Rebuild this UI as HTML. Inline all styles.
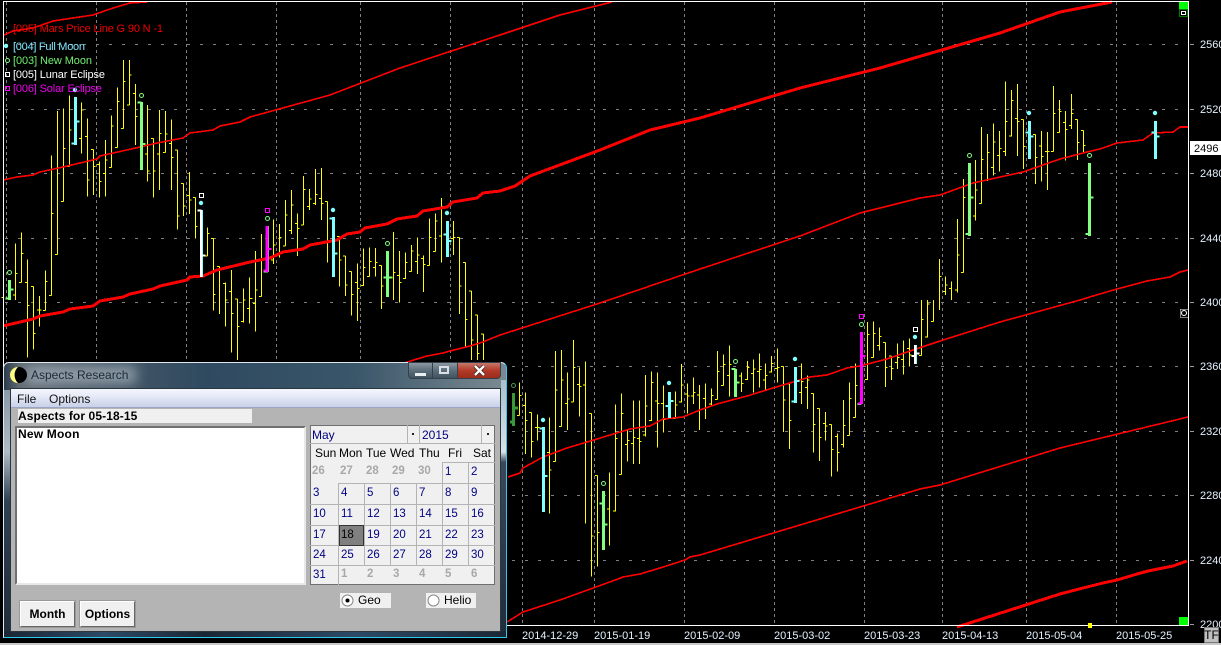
<!DOCTYPE html>
<html><head><meta charset="utf-8"><style>
html,body{margin:0;padding:0;background:#000;width:1221px;height:645px;overflow:hidden}
body{position:relative;font-family:"Liberation Sans",sans-serif}
svg.c{position:absolute;left:0;top:0}
svg text{font-family:"Liberation Sans",sans-serif;font-size:11px}
.a{position:absolute}
.t{position:absolute;white-space:nowrap;line-height:14px;font-size:12px}
.d{color:#000080;font-size:11.5px}
.g{color:#a8a8a8;font-size:11.5px;font-weight:bold}
.w{color:#000;font-size:12px}
.b{position:absolute;background:#f0f0f0;border:1px solid;border-color:#fff #666 #666 #fff;box-shadow:0 0 0 1px #999;box-sizing:border-box;text-align:center;font-weight:bold;font-size:12px;line-height:24px;color:#000}
</style></head><body>
<svg class="c" width="1221" height="645" viewBox="0 0 1221 645">
<rect width="1221" height="645" fill="#000"/>
<rect y="643" width="1221" height="2" fill="#c8c8c8"/>
<g stroke="#808080" fill="none" stroke-width="1" stroke-dasharray="3 10" shape-rendering="crispEdges">
<path d="M5 44.500H1188M5 109.500H1188M5 173.500H1188M5 238.500H1188M5 302.500H1188M5 366.500H1188M5 431.500H1188M5 495.500H1188M5 560.500H1188"/>
</g>
<g stroke="#808080" fill="none" stroke-width="1" stroke-dasharray="3 3" shape-rendering="crispEdges">
<path d="M6.500 2V625M96.500 2V625M186.500 2V625M276.500 2V625M360.500 2V625M450.500 2V625M522.500 2V625M594.500 2V625M684.500 2V625M774.500 2V625M864.500 2V625M942.500 2V625M1026.500 2V625M1116.500 2V625"/>
</g>
<g stroke="#ffff00" fill="none" stroke-width="3" shape-rendering="crispEdges">
<path transform="translate(0,60) scale(.33333)" d="M4 712h7M46 550V720M39 705h7M46 640h7M64 517V668M57 668h7M64 580h7M82 598V893M75 668h7M82 737h7M100 680V868M93 680h7M100 820h7M118 708V800M111 750h7M118 750h7M136 632V752M129 752h7M136 664h7M154 286V706M147 706h7M154 460h7M172 153V584M165 584h7M190 145V425M183 425h7M190 265h7M208 106V320M201 320h7M208 210h7M244 128V280M237 235h7M244 150h7M262 175V410M255 230h7M262 360h7M280 268V405M273 268h7M280 320h7M298 305V413M291 313h7M298 365h7M316 240V410M309 340h7M316 300h7M334 166V322M327 322h7M334 198h7M352 82V262M345 262h7M352 125h7M370 0V205M363 205h7M370 65h7M388 0V135M381 135h7M388 45h7M406 72V255M399 100h7M406 170h7M442 135V365M435 282h7M442 333h7M460 235V413M453 235h7M460 333h7M478 150V390M471 282h7M478 220h7M496 153V278M489 278h7M496 222h7M514 178V390M507 250h7M514 292h7M532 270V508M525 270h7M532 468h7M550 370V468M543 370h7M550 438h7M568 336V462M561 406h7M568 420h7M586 412V535M579 412h7M586 500h7M622 502V588M615 588h7M622 520h7M640 535V752M633 535h7M640 704h7M658 620V762M651 620h7M658 630h7M676 668V800M669 670h7M676 720h7M694 630V878M687 695h7M694 760h7M712 717V900M705 717h7M712 800h7M730 685V787M723 785h7M730 720h7M748 652V790M741 745h7"/>
<path transform="translate(250,160) scale(.33333)" d="M0 415h7M16 273V515M9 430h7M16 390h7M34 222V410M27 410h7M34 300h7M70 178V312M63 300h7M70 255h7M88 192V292M81 280h7M88 232h7M106 120V258M99 258h7M106 165h7M124 90V222M117 212h7M124 135h7M142 160V288M135 190h7M142 205h7M160 48V195M153 195h7M160 88h7M178 87V150M171 140h7M178 117h7M196 27V135M189 130h7M196 103h7M214 24V180M207 115h7M214 130h7M232 125V307M225 125h7M232 248h7M268 230V380M261 230h7M268 300h7M286 288V408M279 288h7M286 375h7M304 334V467M297 334h7M304 403h7M322 310V483M315 367h7M322 385h7M340 265V378M333 376h7M340 322h7M358 262V350M351 350h7M358 305h7M376 264V350M369 322h7M376 307h7M394 316V447M387 316h7M394 378h7M430 216V420M430 338h7M448 273V428M441 347h7M448 367h7M466 278V357M459 355h7M466 307h7M484 255V335M477 335h7M484 273h7M502 232V342M495 305h7M502 285h7M520 286V396M513 295h7M520 313h7M538 175V317M531 317h7M538 232h7M556 160V275M549 275h7M556 183h7M574 114V308M567 228h7M574 140h7M610 183V285M603 235h7M610 232h7M628 232V462M621 232h7M628 378h7M646 307V560M639 307h7M646 478h7M664 393V600M657 393h7M664 540h7M682 465V600M675 465h7M682 580h7M700 522V600M693 522h7"/>
<path transform="translate(500,340) scale(.33333)" d="M58 127V226M51 226h7M58 167h7M76 157V342M69 197h7M76 242h7M94 217V352M87 217h7M94 305h7M112 223V302M105 262h7M112 262h7M148 232V520M141 337h7M148 390h7M166 33V364M159 364h7M166 150h7M184 30V260M177 260h7M184 120h7M202 97V270M195 190h7M202 177h7M220 0V186M213 186h7M220 82h7M238 82V230M231 133h7M238 140h7M256 64V550M249 135h7M256 304h7M274 220V710M267 220h7M274 588h7M292 406V680M285 406h7M292 577h7M328 397V617M321 507h7M346 193V515M339 513h7M346 295h7M364 160V403M357 403h7M364 220h7M382 268V365M375 313h7M382 302h7M400 181V372M393 310h7M400 292h7M418 181V372M411 295h7M418 305h7M436 105V290M429 285h7M436 198h7M454 94V243M447 241h7M454 127h7M472 97V323M465 183h7M472 190h7M490 136V278M483 190h7M490 238h7M526 155V235M519 235h7M526 195h7M544 72V188M537 186h7M544 135h7M562 130V220M555 162h7M562 168h7M580 112V192M573 168h7M580 157h7M598 135V270M591 165h7"/>
<path transform="translate(700,300) scale(.33333)" d="M16 250V357M9 295h7M16 322h7M34 265V318M27 312h7M34 287h7M52 153V298M45 298h7M52 214h7M70 163V257M63 257h7M70 193h7M88 136V290M81 226h7M88 193h7M124 217V276M117 228h7M124 250h7M142 183V240M135 238h7M142 203h7M160 178V278M153 220h7M160 207h7M178 160V262M171 214h7M178 208h7M196 190V270M189 240h7M196 226h7M214 168V218M207 216h7M214 190h7M232 145V248M225 205h7M232 203h7M250 200V396M243 200h7M250 300h7M268 252V447M261 252h7M268 361h7M304 190V312M297 277h7M304 245h7M322 226V327M315 262h7M322 240h7M340 280V458M333 280h7M340 373h7M358 325V483M351 325h7M358 412h7M376 336V422M369 370h7M376 378h7M394 373V530M387 373h7M394 448h7M412 400V515M405 410h7M412 457h7M430 300V442M423 433h7M430 376h7M448 247V406M441 406h7M448 295h7M466 190V352M459 352h7M466 257h7M502 66V240M495 238h7M502 103h7M520 64V173M513 172h7M520 100h7M538 82V152M531 136h7M538 110h7M556 127V261M549 127h7M556 202h7M574 168V240M567 168h7M574 205h7M592 130V207M585 187h7M592 172h7M610 122V224M603 178h7M610 157h7M628 115V200M621 145h7M628 165h7M664 0V166M657 166h7M664 58h7M682 0V113M675 111h7M682 12h7M700 0V65M693 65h7"/>
<path transform="translate(920,70) scale(.33333)" d="M58 567V720M58 620h7M76 620V675M69 665h7M76 645h7M94 635V690M87 655h7M112 447V668M105 660h7M112 555h7M130 327V607M123 607h7M130 382h7M166 270V452M159 438h7M166 360h7M184 171V400M177 400h7M184 268h7M202 192V333M195 330h7M202 247h7M220 160V317M213 292h7M220 216h7M238 183V305M231 256h7M238 235h7M256 34V258M249 244h7M256 154h7M274 60V200M267 198h7M274 91h7M292 42V258M285 145h7M292 154h7M310 148V297M303 148h7M310 230h7M346 193V342M339 193h7M346 262h7M364 183V335M357 228h7M364 259h7M382 186V360M375 244h7M382 244h7M400 48V245M393 244h7M400 130h7M418 90V188M411 187h7M418 124h7M436 123V272M429 157h7M436 178h7M454 72V177M447 167h7M454 130h7M472 148V270M465 148h7M472 217h7M490 181V250M483 181h7M490 226h7"/>
</g>
<g fill="none" stroke="#ff0000" shape-rendering="crispEdges">
<polyline stroke-width="3" points="3,326 33,319 40,316 63,312 70,309 93,306 100,301 123,297 130,294 153,289 160,286 187,280 190,277 203,276 217,270 250,262 270,258 283,252 303,249 310,245 337,240 347,234 360,232 365,228 387,224 397,219 417,216 423,211 447,207 453,202 477,198 483,193 500,191 515,186 530,176 600,150 650,130 700,118 800,88 880,68 1000,33 1060,12 1112,2"/>
<polyline stroke-width="1.600" points="3,180 17,177 33,175 40,172 63,167 97,159 100,156 140,147 157,143 183,138 190,133 213,130 220,126 240,122 250,117 330,95 400,68 500,35 560,15 612,2"/>
<polyline stroke-width="1.600" points="4,35 13,31 33,28 53,21 93,15 113,8 130,3 147,2"/>
<polyline stroke-width="1.600" points="395,366 417,359 427,356 443,353 450,351 470,346 483,342 500,335 600,303 700,269 800,236 860,213 920,198 940,195 973,183 1023,172 1060,159 1087,152 1100,149 1117,143 1143,140 1153,133 1173,132 1180,127 1188,127"/>
<polyline stroke-width="1.600" points="508,477 520,473 523,468 543,457 567,448 597,439 630,429 650,426 663,419 683,417 700,410 717,404 747,396 773,388 810,377 827,375 847,368 860,366 887,359 913,350 940,341 1000,322 1080,300 1093,296 1117,289 1147,281 1170,277 1180,272 1188,270"/>
<polyline stroke-width="1.600" points="507,622 523,612 560,600 618,579 623,577 640,574 660,568 685,560 690,557 700,555 800,525 920,489 940,485 1060,448 1188,417"/>
<polyline stroke-width="3" points="957,627 1060,594 1083,588 1103,583 1117,580 1137,574 1148,571 1173,566 1187,561"/>
</g>
<g shape-rendering="crispEdges">
<path fill="none" stroke="#80ffff" stroke-width="3" d="M75.500 97V145M201.500 210V277M333.500 217V277M447.500 221V257M543.500 427V512M669.500 392V418M795.500 367V403M915.500 345V364M1029.500 121V159M1155.500 121V159"/>
<g stroke="#80ffff" stroke-width="6" fill="none"><path transform="translate(0,60) scale(.33333)" d="M215 250h11M226 184h12"/><path transform="translate(250,160) scale(.33333)" d="M238 175h12M250 280h12M580 223h12M592 243h13"/><path transform="translate(500,340) scale(.33333)" d="M118 265h12M130 408h13M496 198h12M508 183h13"/><path transform="translate(700,300) scale(.33333)" d="M274 305h12M286 243h13"/><path transform="translate(920,70) scale(.33333)" d="M316 187h12M328 199h13M694 187h12M706 199h13"/></g>
<path fill="none" stroke="#80ff80" stroke-width="3" d="M9.500 280V300M141.500 102V170M387.500 251V297M603.500 491V550M735.500 369V397M969.500 163V236M1089.500 163V236"/>
<g stroke="#80ff80" stroke-width="6" fill="none"><path transform="translate(0,60) scale(.33333)" d="M17 715h11M28 688h12M413 127h11M424 252h12"/><path transform="translate(250,160) scale(.33333)" d="M400 352h28M41 335h13"/><path transform="translate(500,340) scale(.33333)" d="M298 490h12M310 553h13"/><path transform="translate(700,300) scale(.33333)" d="M94 207h12M106 247h13M472 312h12"/><path transform="translate(920,70) scale(.33333)" d="M136 492h12M148 382h13M496 492h12M508 382h13"/></g>
<path d="M268.500 226V272" stroke="#80ff80" stroke-width="1" fill="none"/>
<path d="M513.500 393V426M510 422h4M514 408h4" stroke="#3a9a3a" stroke-width="3" fill="none"/>
<path d="M267 226V272M861.500 332V404" stroke="#ff00ff" stroke-width="3" fill="none"/>
<g stroke="#ff00ff" stroke-width="6" fill="none"><path transform="translate(250,160) scale(.33333)" d="M51 267h13M40 332h11"/><path transform="translate(700,300) scale(.33333)" d="M484 168h13M474 310h10"/></g>
<rect x="200" y="210" width="2" height="67" fill="#fff"/>
<rect x="914" y="345" width="2" height="19" fill="#fff"/>
<g stroke="#fff" stroke-width="6" fill="none"><path transform="translate(0,60) scale(.33333)" d="M592 452h12M604 586h13"/><path transform="translate(700,300) scale(.33333)" d="M634 168h12M646 160h13"/></g>
</g>
<g fill="#80ffff"><circle cx="75" cy="90" r="2.200"/><circle cx="201" cy="203" r="2.200"/><circle cx="333" cy="210" r="2.200"/><circle cx="447" cy="213" r="2.200"/><circle cx="543" cy="420" r="2.200"/><circle cx="669" cy="383" r="2.200"/><circle cx="795" cy="359" r="2.200"/><circle cx="915" cy="337" r="2.200"/><circle cx="1029" cy="113" r="2.200"/><circle cx="1155" cy="113" r="2.200"/><circle cx="6" cy="46" r="2.200"/></g>
<g fill="none" stroke="#80ff80" stroke-width="1"><circle cx="9.500" cy="272.500" r="2"/><circle cx="141.500" cy="95.500" r="2"/><circle cx="267.500" cy="218.500" r="2"/><circle cx="387.500" cy="243.500" r="2"/><circle cx="513.500" cy="385.500" opacity=".6" r="2"/><circle cx="603.500" cy="483.500" r="2"/><circle cx="735.500" cy="361.500" r="2"/><circle cx="861.500" cy="324.500" r="2"/><circle cx="969.500" cy="155.500" r="2"/><circle cx="1089.500" cy="155.500" r="2"/><circle cx="7.500" cy="60.500" r="2"/></g>
<g fill="none" stroke="#fff" shape-rendering="crispEdges"><rect x="199.500" y="193.500" width="4" height="4"/><rect x="913.500" y="327.500" width="4" height="4"/><rect x="5.500" y="72.500" width="4" height="4"/></g>
<g fill="none" stroke="#ff00ff" shape-rendering="crispEdges"><rect x="265.500" y="208.500" width="4" height="4"/><rect x="859.500" y="314.500" width="4" height="4"/><rect x="5.500" y="86.500" width="4" height="4"/></g>
<path d="M3.500 1V625.500M3.500 1.500H1188.500V625.500H3" fill="none" stroke="#fff" stroke-width="1" shape-rendering="crispEdges"/>
<g stroke="#999" shape-rendering="crispEdges"><path d="M1190 44.500h4M1190 109.500h4M1190 173.500h4M1190 238.500h4M1190 302.500h4M1190 366.500h4M1190 431.500h4M1190 495.500h4M1190 560.500h4M1190 624.500h4"/></g>
<g fill="#e4f2ff">
<text x="1200" y="48">2560</text><text x="1200" y="113">2520</text><text x="1200" y="177">2480</text><text x="1200" y="242">2440</text><text x="1200" y="306">2400</text><text x="1200" y="370">2360</text><text x="1200" y="435">2320</text><text x="1200" y="499">2280</text><text x="1200" y="564">2240</text><text x="1200" y="628">2200</text>
<text x="522" y="639">2014-12-29</text><text x="594" y="639">2015-01-19</text><text x="684" y="639">2015-02-09</text><text x="774" y="639">2015-03-02</text><text x="864" y="639">2015-03-23</text><text x="942" y="639">2015-04-13</text><text x="1026" y="639">2015-05-04</text><text x="1116" y="639">2015-05-25</text>
</g>
<rect x="1190" y="141" width="31" height="14" fill="#fff"/>
<text x="1194" y="152" fill="#000">2496</text>
<text x="13" y="32" fill="#f00000" textLength="150">[005] Mars Price Line G 90 N -1</text>
<text x="13" y="50" fill="#80e8ff" textLength="72">[004] Full Moon</text>
<text x="13" y="64" fill="#70f070" textLength="79">[003] New Moon</text>
<text x="13" y="78" fill="#fff" textLength="92">[005] Lunar Eclipse</text>
<text x="13" y="92" fill="#f000f0" textLength="89">[006] Solar Eclipse</text>
<g shape-rendering="crispEdges">
<rect x="1179" y="2" width="9" height="7" fill="#00ff00"/>
<rect x="1179.500" y="9.500" width="8" height="7" fill="#000" stroke="#008000"/>
<rect x="1181.500" y="11.500" width="4" height="3" fill="none" stroke="#fff"/>
<rect x="1179" y="617" width="9" height="8" fill="#00ff00"/>
<rect x="1088" y="623" width="4" height="5" fill="#ffff00"/>
<rect x="1180" y="309" width="8" height="8" fill="#000" stroke="#fff" stroke-width=".5"/>
</g>
<circle cx="1184" cy="313" r="2.500" fill="none" stroke="#fff"/>
<rect x="1204.500" y="627.500" width="14" height="15" fill="#c0c0c0" stroke="#777"/>
<text x="1211.500" y="639" fill="#000" text-anchor="middle" style="font-size:12px">TF</text>
</svg>

<div class="a" style="left:3px;top:362px;width:504px;height:276px;border:1px solid #dfe8ee;border-bottom:1px solid #30c8f0;border-right:1px solid #30c8f0;border-radius:6px 6px 0 0;box-sizing:border-box;background:linear-gradient(90deg,#2b3c4c 0,#5f6a72 3%,#4a5a68 18%,#2f4a60 40%,#3a566a 70%,#7b8a92 100%);overflow:hidden">
 <div class="a" style="left:22px;top:3px;width:110px;height:18px;background:rgba(190,200,210,.6);filter:blur(6px)"></div>
 <div class="a" style="left:0;top:27px;width:6px;height:247px;background:linear-gradient(180deg,#8a9aa6 0,#aebcc6 25%,#2f4152 45%,#1f2c3a 100%)"></div>
 <div class="a" style="right:0;top:17px;width:5px;height:257px;background:linear-gradient(180deg,#a8c0cc 0,#d8e4e8 28%,#39495a 32%,#1f2c3a 100%)"></div>
 <div class="a" style="left:0;bottom:0;width:100%;height:6px;background:linear-gradient(90deg,#1a2634,#2c4a66 20%,#1a2634 40%,#2c4a66 70%,#1a2634)"></div>
</div>
<svg class="a" style="left:10px;top:366px" width="18" height="18"><circle cx="9" cy="9" r="8" fill="#000"/><path d="M8 1A8 8 0 0 0 8 17A11 11 0 0 1 8 1Z" fill="#ffff80"/></svg>
<div class="t" style="left:31px;top:368px;color:#1c2a36">Aspects Research</div>
<div class="a" style="left:408px;top:362px;width:25px;height:17px;background:linear-gradient(180deg,#8a98a2,#5c6e7a 50%,#3f5260);border:1px solid #33404a;box-sizing:border-box;border-radius:0 0 0 4px"><div class="a" style="left:6px;top:10px;width:11px;height:3px;background:#e8eef2"></div></div>
<div class="a" style="left:433px;top:362px;width:25px;height:17px;background:linear-gradient(180deg,#8a98a2,#5c6e7a 50%,#3f5260);border:1px solid #33404a;border-left:0;box-sizing:border-box"><div class="a" style="left:6px;top:3px;width:10px;height:8px;border:2px solid #d8e0e6;box-sizing:border-box"></div></div>
<div class="a" style="left:458px;top:362px;width:43px;height:17px;background:linear-gradient(180deg,#c8786a,#b23a28 50%,#9c2c1c);border:1px solid #33404a;border-left:0;box-sizing:border-box;border-radius:0 0 4px 0"></div>
<svg class="a" style="left:472px;top:364px" width="15" height="13"><path d="M3 2L12 11M12 2L3 11" stroke="#3a2020" stroke-width="4"/><path d="M3 2L12 11M12 2L3 11" stroke="#fff" stroke-width="2.400"/></svg>

<div class="a" style="left:10px;top:388px;width:491px;height:244px;background:#b4b4b4;border:1px solid #2c3640;box-sizing:border-box;overflow:hidden">
 <div class="a" style="left:0;top:0;width:100%;height:19px;background:linear-gradient(180deg,#f4f6fc 0,#e8ecf8 35%,#c8d0e8 100%);border-bottom:1px solid #9aa4c4;box-sizing:border-box"></div>
</div>
<div class="t" style="left:17px;top:392px;color:#111">File</div>
<div class="t" style="left:49px;top:392px;color:#111">Options</div>
<div class="a" style="left:18px;top:409px;width:234px;height:14px;background:#f0f0f0"></div>
<div class="t" style="left:18px;top:409px;font-weight:bold;color:#000;letter-spacing:.1px">Aspects for 05-18-15</div>
<div class="a" style="left:15px;top:426px;width:291px;height:159px;background:#fff;border:2px solid;border-color:#707070 #e8e8e8 #e8e8e8 #707070;box-sizing:border-box"></div>
<div class="t" style="left:18px;top:427px;font-weight:bold;color:#000;letter-spacing:.2px">New Moon</div>

<div class="a" style="left:310px;top:425px;width:185px;height:160px;background:#f0f0f0;border:1px solid #707070;box-sizing:border-box"></div>
<svg class="a" style="left:310px;top:425px" width="185" height="160"><g stroke="#b4b4b4" fill="none" shape-rendering="crispEdges"><path d="M0 18.500H185M132.500 37.500H185M28.500 58.500H185M0 79.500H185M0 100.500H185M0 120.500H185M0 140.500H185"/><path d="M132.500 37V140M158.500 37V140M28.500 58V160M54.500 58V140M80.500 58V140M106.500 58V140M97.500 0V18M109.500 0V18M171.500 0V18"/></g>
<rect x="29.500" y="100.500" width="24" height="20" fill="#808080" stroke="#333" shape-rendering="crispEdges"/></svg>
<div class="t d" style="left:312px;top:428px;font-size:12px">May</div>
<div class="t d" style="left:422px;top:428px;font-size:12px">2015</div>
<div class="a" style="left:412px;top:433px;width:2px;height:2px;background:#222"></div>
<div class="a" style="left:487px;top:433px;width:2px;height:2px;background:#222"></div>
<div class="t w" style="left:315px;top:446px">Sun</div><div class="t w" style="left:339px;top:446px">Mon</div><div class="t w" style="left:366px;top:446px">Tue</div><div class="t w" style="left:390px;top:446px">Wed</div><div class="t w" style="left:419px;top:446px">Thu</div><div class="t w" style="left:448px;top:446px">Fri</div><div class="t w" style="left:473px;top:446px">Sat</div>
<div class="t g" style="left:312px;top:464px">26</div><div class="t g" style="left:340px;top:464px">27</div><div class="t g" style="left:366px;top:464px">28</div><div class="t g" style="left:392px;top:464px">29</div><div class="t g" style="left:418px;top:464px">30</div>
<div class="t d" style="left:445px;top:465px">1</div><div class="t d" style="left:471px;top:465px">2</div>
<div class="t d" style="left:313px;top:486px">3</div><div class="t d" style="left:341px;top:486px">4</div><div class="t d" style="left:367px;top:486px">5</div><div class="t d" style="left:393px;top:486px">6</div><div class="t d" style="left:419px;top:486px">7</div><div class="t d" style="left:445px;top:486px">8</div><div class="t d" style="left:471px;top:486px">9</div>
<div class="t d" style="left:313px;top:507px">10</div><div class="t d" style="left:341px;top:507px">11</div><div class="t d" style="left:367px;top:507px">12</div><div class="t d" style="left:393px;top:507px">13</div><div class="t d" style="left:419px;top:507px">14</div><div class="t d" style="left:445px;top:507px">15</div><div class="t d" style="left:471px;top:507px">16</div>
<div class="t d" style="left:313px;top:528px">17</div><div class="t" style="left:341px;top:528px;font-size:11.5px;color:#000">18</div><div class="t d" style="left:367px;top:528px">19</div><div class="t d" style="left:393px;top:528px">20</div><div class="t d" style="left:419px;top:528px">21</div><div class="t d" style="left:445px;top:528px">22</div><div class="t d" style="left:471px;top:528px">23</div>
<div class="t d" style="left:313px;top:548px">24</div><div class="t d" style="left:341px;top:548px">25</div><div class="t d" style="left:367px;top:548px">26</div><div class="t d" style="left:393px;top:548px">27</div><div class="t d" style="left:419px;top:548px">28</div><div class="t d" style="left:445px;top:548px">29</div><div class="t d" style="left:471px;top:548px">30</div>
<div class="t d" style="left:313px;top:568px">31</div><div class="t g" style="left:341px;top:567px">1</div><div class="t g" style="left:367px;top:567px">2</div><div class="t g" style="left:393px;top:567px">3</div><div class="t g" style="left:419px;top:567px">4</div><div class="t g" style="left:445px;top:567px">5</div><div class="t g" style="left:471px;top:567px">6</div>

<div class="a" style="left:340px;top:593px;width:51px;height:15px;background:#f0f0f0"></div>
<svg class="a" style="left:341px;top:594px" width="13" height="13"><circle cx="6.500" cy="6.500" r="5.500" fill="#fff" stroke="#888"/><circle cx="6.500" cy="6.500" r="2" fill="#000"/></svg>
<div class="t" style="left:358px;top:593px;color:#000">Geo</div>
<div class="a" style="left:426px;top:593px;width:50px;height:15px;background:#f0f0f0"></div>
<svg class="a" style="left:427px;top:594px" width="13" height="13"><circle cx="6.500" cy="6.500" r="5.500" fill="#fff" stroke="#888"/></svg>
<div class="t" style="left:444px;top:593px;color:#000">Helio</div>

<div class="b" style="left:20px;top:601px;width:55px;height:26px">Month</div>
<div class="b" style="left:80px;top:601px;width:55px;height:26px">Options</div>
</body></html>
